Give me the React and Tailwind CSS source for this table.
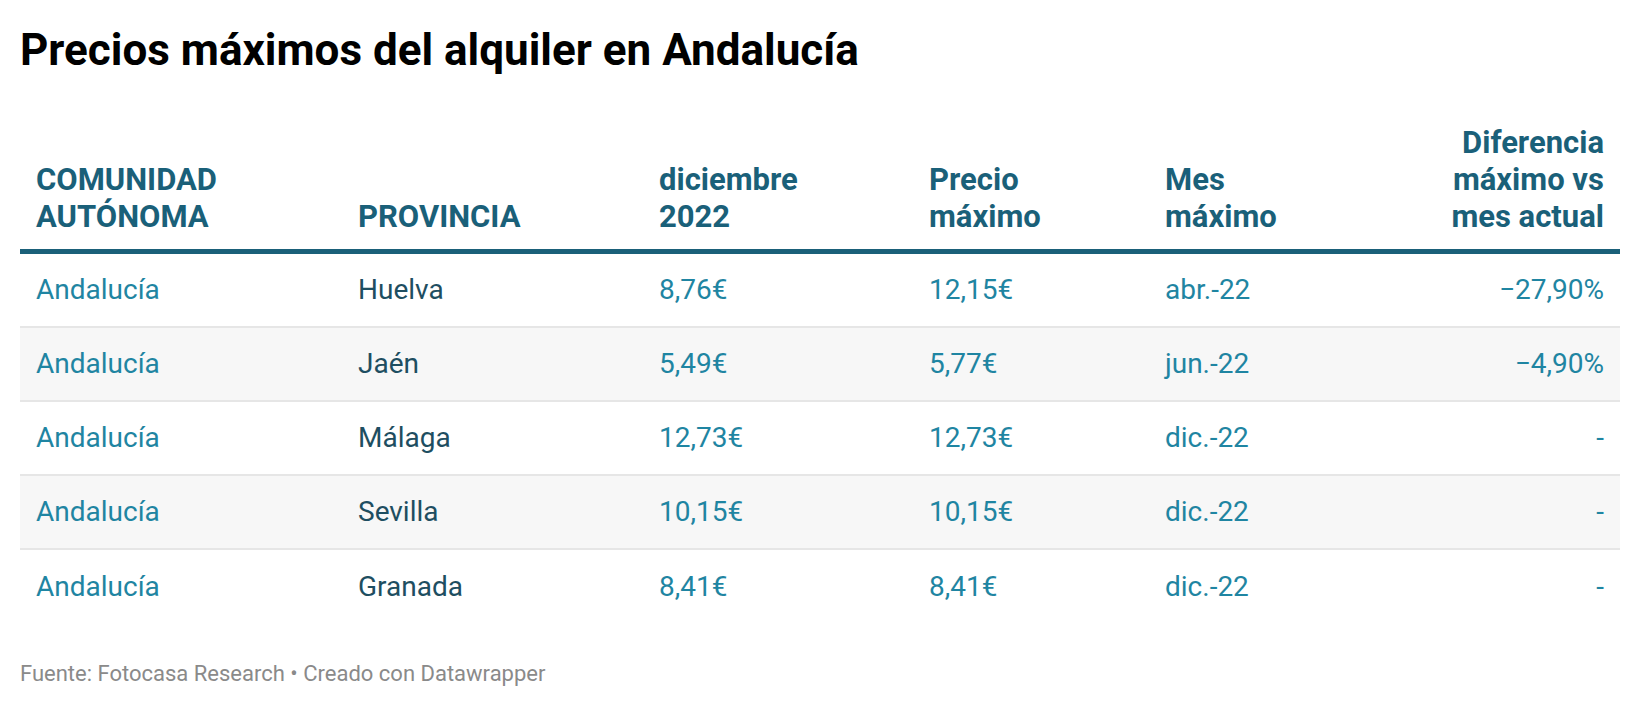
import React from "react";

const rows = [
  ["Andalucía", "Huelva", "8,76€", "12,15€", "abr.-22", "−27,90%"],
  ["Andalucía", "Jaén", "5,49€", "5,77€", "jun.-22", "−4,90%"],
  ["Andalucía", "Málaga", "12,73€", "12,73€", "dic.-22", "-"],
  ["Andalucía", "Sevilla", "10,15€", "10,15€", "dic.-22", "-"],
  ["Andalucía", "Granada", "8,41€", "8,41€", "dic.-22", "-"],
];

const grid = "grid grid-cols-[322px_301px_270px_236px_236px_1fr]";

export default function App() {
  return (
    <div
      className="w-[1640px] h-[708px] bg-white px-5 pt-[24px] overflow-hidden"
      style={{ fontFamily: "Roboto, 'Liberation Sans', sans-serif" }}
    >
      <h1 className="text-[44px] leading-[52px] font-bold text-black">
        Precios máximos del alquiler en Andalucía
      </h1>

      <div className="mt-[48px] w-[1600px]">
        <div className={`${grid} items-end border-b-[5px] border-[#1a6079] pb-[14px] text-[31px] leading-[37px] font-bold text-[#1a6079]`}>
          <div className="px-4">COMUNIDAD<br />AUTÓNOMA</div>
          <div className="px-4">PROVINCIA</div>
          <div className="px-4">diciembre<br />2022</div>
          <div className="px-4">Precio<br />máximo</div>
          <div className="px-4">Mes<br />máximo</div>
          <div className="px-4 text-right">Diferencia<br />máximo vs<br />mes actual</div>
        </div>

        {rows.map((r, i) => (
          <div
            key={i}
            className={`${grid} items-center h-[74px] text-[28px] leading-none ${i % 2 === 1 ? "bg-[#f7f7f7]" : "bg-white"} ${i < rows.length - 1 ? "border-b-2 border-[#e6e6e6]" : ""}`}
          >
            <div className="px-4 text-[#1f85a2]">{r[0]}</div>
            <div className="px-4 text-[#1e4e61]">{r[1]}</div>
            <div className="px-4 text-[#1f85a2]">{r[2]}</div>
            <div className="px-4 text-[#1f85a2]">{r[3]}</div>
            <div className="px-4 text-[#1f85a2]">{r[4]}</div>
            <div className="px-4 text-right text-[#1f85a2]">{r[5]}</div>
          </div>
        ))}
      </div>

      <div className="mt-[36px] text-[22px] leading-[28px] text-[#8a8a8a]">
        Fuente: Fotocasa Research • Creado con Datawrapper
      </div>
    </div>
  );
}
